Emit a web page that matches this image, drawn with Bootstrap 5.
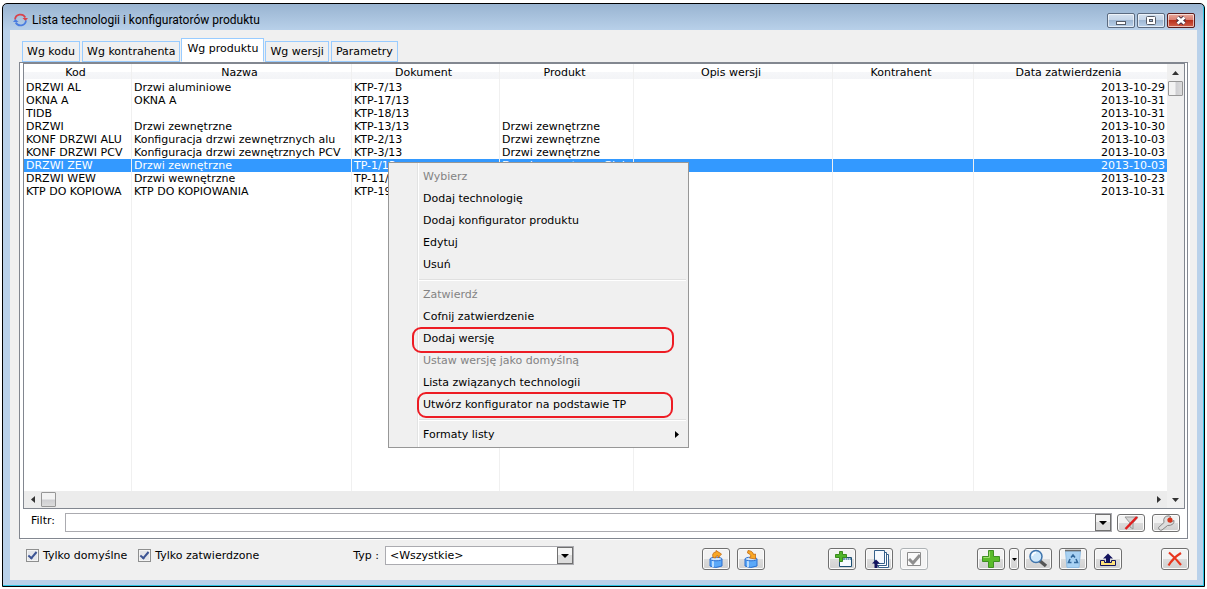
<!DOCTYPE html>
<html lang="pl">
<head>
<meta charset="utf-8">
<meta name="viewport" content="width=device-width, initial-scale=1">
<title>Lista technologii i konfiguratorów produktu</title>
<link href="https://cdn.jsdelivr.net/npm/bootstrap@5.3.0/dist/css/bootstrap.min.css" rel="stylesheet">
<style>
  body { font: 11px/13px "DejaVu Sans", Verdana, sans-serif; color: #000; background: #fff; }
  button, input, select { font: inherit; color: inherit; }
  svg { display: block; }

  .win { margin: 3px 2px 2px; border: 1px solid #000; border-radius: 5px 5px 0 0; padding: 0 7px 6px;
         background: linear-gradient(#99b4d1, #b9d1ea 27px); box-shadow: inset -1px -1px #2cc4e4; }
  .win-title { height: 26px; padding: 6px 2px 0 3px; font: 12px/20px Roboto, "Open Sans", sans-serif; }
  .cap-btns { gap: 2px; }
  .cap-btn { width: 28px; height: 15px; padding: 0; border: 1px solid #5b6b80; border-radius: 2px;
             background: linear-gradient(#d5e2f0, #c3d4e8 50%, #9fb8d4 50%, #b9d1ea); box-shadow: inset 0 0 0 1px #ffffff99; }
  .cap-close { border-color: #5a1c1c; background: linear-gradient(#e9a99c, #d8796a 50%, #b8301c 50%, #d2604a); }
  .client { background: #f0f0f0; padding-top: 8px; }

  .tabs { gap: 2px; padding-left: 12px; height: 24px; }
  .tab-btn { height: 21px; padding: 0 4px; border: 1px solid #99ccff; background: #f0f0f0; white-space: nowrap; }
  .tab-btn.active { height: 24px; padding: 0 5px 3px; background: #fff; margin: 0 -1px; border-bottom-color: #fff; }

  .panel { margin: 0 9px 0 9px; border: 1px solid #828790; background: #fff; box-shadow: 2px 1px #fff; }
  .listbox { display: grid; grid-template-columns: 1fr 17px; grid-template-rows: 1fr 17px;
             margin: 0 2px 0 3px; border: 1px solid #828790; }
  .data { table-layout: fixed; width: 100%; height: 100%; border-collapse: separate; border-spacing: 0; }
  .data th, .data td { height: 13px; padding: 0 2px; line-height: 13px; white-space: nowrap; overflow: hidden; border-right: 1px solid #f0f0f0; }
  .data th { height: 17px; padding: 0 4px 0 0; font-weight: 400; text-align: center; background: linear-gradient(#fff 8px, #f6f7f9 8px, #f3f4f7 15px, #fff 15px); }
  .data th:last-child, .data td:last-child { border-right: 0; }
  .data td:last-child { text-align: right; }
  .data .sel td { background: #3399ff; color: #fff; }
  .data .rest td { height: auto; }
  .vbar { background: #f0f0f0; }
  .hbar { background: #ececec; }
  .sb-btn { width: 17px; height: 17px; padding: 0; border: 0; background: none; display: grid; place-items: center; }
  .thumb { width: 15px; height: 15px; border: 1px solid #979797; border-radius: 1px; }
  .vbar .thumb { background: linear-gradient(90deg, #f3f3f3 45%, #cfcfd2 55%, #dcdcdc); }
  .hbar .thumb { background: linear-gradient(#f3f3f3 45%, #cfcfd2 55%, #dcdcdc); }

  .filter { gap: 5px; padding: 4px 7px 6px 11px; }
  .filter label { width: 29px; line-height: 16px; }
  .filter .tool + .tool { margin-left: 2px; }
  .combo { border: 1px solid #ababb0; background: #fff; height: 19px; }
  .combo input, .combo select { appearance: none; border: 0; outline: 0; background: none; padding: 0 4px; height: 17px; line-height: 17px; width: 100%; }
  .drop { width: 16px; height: 17px; flex: none; padding: 0; border: 1px solid #707070; display: grid; place-items: center;
          background: linear-gradient(#f4f4f4 50%, #dcdcdc 50%); pointer-events: none; }
  .tool { width: 28px; height: 22px; padding: 0; border: 1px solid #707070; border-radius: 3px; display: grid; place-items: center;
          background: linear-gradient(#f2f2f2 50%, #dcdcdc 50%, #d0d0d0); box-shadow: inset 0 0 0 1px #fcfcfc; }
  .tool.low { height: 18px; }
  .tool.slim { width: 10px; margin: 0 -2px 0 -3px; }
  .tool:disabled { border-color: #adb2b5; background: #f4f4f4; }

  .footer-bar { padding: 7px 8px 9px 16px; height: 41px; }
  .ticks { height: 18px; }
  .tick { appearance: none; width: 13px; height: 13px; margin: 0 4px 0 0; border: 1px solid #8e8f8f; background: #e4e6ea;
          box-shadow: inset 0 0 0 1px #f4f4f4; display: grid; place-items: center; }
  label + .tick { margin-left: 11px; }
  .tick:checked::before { content: ""; width: 5px; height: 9px; border: solid #3c5494; border-width: 0 2px 2px 0; transform: rotate(40deg); margin-top: -2px; }
  .typ-group { gap: 6px; margin-left: 94px; }
  .typ { width: 189px; }
  .tools-right { gap: 7px; margin-top: 2px; }
  .gap-a { margin-left: 56px; }
  .gap-b { margin-left: 2px; }
  .gap-c { margin-left: 42px; }
  .gap-d { margin-left: 32px; }

  .ctx { left: 388px; top: 162px; width: 301px; padding: 2px; border: 1px solid #979797; border-radius: 0; font-size: 11px; color: #000;
         background: linear-gradient(90deg, #f0f0f0 28px, #e2e3e3 28px, #e2e3e3 29px, #fff 29px, #fff 30px, #f0f0f0 30px); }
  .ctx .dropdown-item { height: 22px; padding: 1px 7px 0 32px; line-height: 20px; color: #000; position: relative; }
  .ctx .dropdown-item:disabled { color: #838383; }
  .ctx hr { margin: 4px 0 2px 28px; border-top: 1px solid #e0e0e0; border-bottom: 1px solid #fff; opacity: 1; }
  .ringed::after { content: ""; position: absolute; border: 2px solid #ed1c24; border-radius: 9px; inset: 0 12px -4px 21px; }
  .ringed.narrow::after { inset: -1px 13px -3px 26px; }
</style>
</head>
<body class="min-vh-100 d-flex flex-column">
<main class="win flex-grow-1 d-flex flex-column">
  <header class="win-title d-flex align-items-center">
    <svg width="15" height="14" viewBox="0 0 15 14" fill="none" stroke-width="1.800"><path d="M2 6.500A5.500 5.500 0 0 1 12.300 4.500" stroke="#d8434b"/><path d="M9.500 5h5.500l-2.500 3z" fill="#d8434b"/><path d="M13 7.500A5.500 5.500 0 0 1 2.700 9.500" stroke="#4a7de0"/><path d="M0 9h5.500L2.500 6z" fill="#4a7de0"/></svg>
    <span class="ms-1">Lista technologii i konfiguratorów produktu</span>
    <div class="cap-btns ms-auto d-flex">
      <button class="cap-btn" aria-label="Minimalizuj"><svg width="26" height="13"><rect x="8.500" y="7.500" width="9" height="3" fill="#fff" stroke="#555b66"/></svg></button>
      <button class="cap-btn" aria-label="Maksymalizuj"><svg width="26" height="13"><rect x="8.500" y="2.500" width="9" height="8" rx="1" fill="#fff" stroke="#555b66"/><rect x="11.500" y="5.500" width="3" height="2" fill="#9fb8d4" stroke="#555b66"/></svg></button>
      <button class="cap-btn cap-close" aria-label="Zamknij"><svg width="26" height="13"><path d="M9.500 3.500l7 6m0-6l-7 6" stroke="#4b3040" stroke-width="4.500"/><path d="M9.500 3.500l7 6m0-6l-7 6" stroke="#fff" stroke-width="2.600"/></svg></button>
    </div>
  </header>

  <section class="client flex-grow-1 d-flex flex-column">
    <nav class="tabs d-flex align-items-end" aria-label="Zakładki">
      <button class="tab-btn">Wg kodu</button>
      <button class="tab-btn">Wg kontrahenta</button>
      <button class="tab-btn active">Wg produktu</button>
      <button class="tab-btn">Wg wersji</button>
      <button class="tab-btn">Parametry</button>
    </nav>

    <div class="panel flex-grow-1 d-flex flex-column">
      <div class="listbox flex-grow-1">
        <table class="data">
          <colgroup><col style="width:108px"><col style="width:220px"><col style="width:148px"><col style="width:134px"><col style="width:199px"><col style="width:141px"><col></colgroup>
          <thead><tr><th>Kod</th><th>Nazwa</th><th>Dokument</th><th>Produkt</th><th>Opis wersji</th><th>Kontrahent</th><th>Data zatwierdzenia</th></tr></thead>
          <tbody>
            <tr><td>DRZWI AL</td><td>Drzwi aluminiowe</td><td>KTP-7/13</td><td></td><td></td><td></td><td>2013-10-29</td></tr>
            <tr><td>OKNA A</td><td>OKNA A</td><td>KTP-17/13</td><td></td><td></td><td></td><td>2013-10-31</td></tr>
            <tr><td>TIDB</td><td></td><td>KTP-18/13</td><td></td><td></td><td></td><td>2013-10-31</td></tr>
            <tr><td>DRZWI</td><td>Drzwi zewnętrzne</td><td>KTP-13/13</td><td>Drzwi zewnętrzne</td><td></td><td></td><td>2013-10-30</td></tr>
            <tr><td>KONF DRZWI ALU</td><td>Konfiguracja drzwi zewnętrznych alu</td><td>KTP-2/13</td><td>Drzwi zewnętrzne</td><td></td><td></td><td>2013-10-03</td></tr>
            <tr><td>KONF DRZWI PCV</td><td>Konfiguracja drzwi zewnętrznych PCV</td><td>KTP-3/13</td><td>Drzwi zewnętrzne</td><td></td><td></td><td>2013-10-03</td></tr>
            <tr class="sel"><td>DRZWI ZEW</td><td>Drzwi zewnętrzne</td><td>TP-1/13</td><td>Drzwi zewnętrzne Glob</td><td></td><td></td><td>2013-10-03</td></tr>
            <tr><td>DRZWI WEW</td><td>Drzwi wewnętrzne</td><td>TP-11/13</td><td></td><td></td><td></td><td>2013-10-23</td></tr>
            <tr><td>KTP DO KOPIOWA</td><td>KTP DO KOPIOWANIA</td><td>KTP-19/13</td><td></td><td></td><td></td><td>2013-10-31</td></tr>
            <tr class="rest"><td></td><td></td><td></td><td></td><td></td><td></td><td></td></tr>
          </tbody>
        </table>
        <div class="vbar d-flex flex-column align-items-center">
          <button class="sb-btn" aria-label="W górę"><svg width="7" height="4"><path d="M0 4l3.500-4L7 4z" fill="#333"/></svg></button>
          <div class="thumb"></div>
        </div>
        <div class="hbar d-flex align-items-center">
          <button class="sb-btn" aria-label="W lewo"><svg width="4" height="7"><path d="M4 0L0 3.500 4 7z" fill="#333"/></svg></button>
          <div class="thumb"></div>
          <button class="sb-btn ms-auto" aria-label="W prawo"><svg width="4" height="7"><path d="M0 0l4 3.500L0 7z" fill="#333"/></svg></button>
        </div>
        <div class="vbar"><button class="sb-btn" aria-label="W dół"><svg width="7" height="4"><path d="M0 0h7L3.500 4z" fill="#333"/></svg></button></div>
      </div>
      <div class="filter d-flex align-items-start">
        <label for="filtr">Filtr:</label>
        <div class="combo d-flex flex-grow-1"><input id="filtr" type="text"><button class="drop" aria-label="Rozwiń"><svg width="8" height="4"><path d="M0 0h8L4 4z"/></svg></button></div>
        <button class="tool low mt-auto" aria-label="Wyczyść filtr"><svg width="20" height="16" viewBox="0 0 20 16"><path d="M4 2h13l-5 6v6l-3-2V8z" fill="#d4d4d4" stroke="#9a9a9a"/><path d="M4.500 14L16 2" stroke="#e02020" stroke-width="2.500"/></svg></button>
        <button class="tool low mt-auto" aria-label="Ustawienia filtra"><svg width="20" height="16" viewBox="0 0 20 16"><path d="M2.500 12.500L8 7.500Q6.500 1 13 .800l2 1-3 2.700 2 3 4-2q.500 5-6.500 5L6 15q-3 1-3.500-2.500z" fill="#ddd" stroke="#858585"/><circle cx="14" cy="5" r="2.600" fill="#d8351c"/></svg></button>
      </div>
    </div>

    <div class="footer-bar d-flex align-items-start">
      <div class="ticks d-flex align-items-center">
        <input class="tick" type="checkbox" id="dom" checked><label for="dom">Tylko domyślne</label>
        <input class="tick" type="checkbox" id="zat" checked><label for="zat">Tylko zatwierdzone</label>
      </div>
      <div class="typ-group d-flex align-items-center">
        <label for="typ" class="text-nowrap">Typ :</label>
        <div class="combo typ d-flex"><select id="typ"><option>&lt;Wszystkie&gt;</option></select><span class="drop"><svg width="8" height="4"><path d="M0 0h8L4 4z"/></svg></span></div>
      </div>
      <div class="tools-right d-flex ms-auto">
        <button class="tool" aria-label="Eksport do bazy"><svg width="22" height="20" viewBox="0 0 22 20"><path d="M5 10v7q5.500 3 12 0v-7z" fill="#5aa8f8" stroke="#2a6fd0"/><path d="M8 11v7" stroke="#b8dcff" stroke-width="2"/><ellipse cx="11" cy="10" rx="6" ry="1.800" fill="#cfe6ff" stroke="#2a6fd0"/><path d="M8 8.500Q6.500 3.500 11 3V1.500L16.500 5 13 9V6.500Q10.500 6.500 10.500 9z" fill="#f9a825" stroke="#c46a10" stroke-width=".800"/></svg></button>
        <button class="tool" aria-label="Import z bazy"><svg width="22" height="20" viewBox="0 0 22 20"><path d="M5 10v7q5.500 3 12 0v-7z" fill="#5aa8f8" stroke="#2a6fd0"/><path d="M8 11v7" stroke="#b8dcff" stroke-width="2"/><ellipse cx="11" cy="10" rx="6" ry="1.800" fill="#cfe6ff" stroke="#2a6fd0"/><path d="M8 1.500q5 .500 5.500 4L15.500 5v5L9.500 9l1.500-2Q10.500 5 7.500 4z" fill="#f9a825" stroke="#c46a10" stroke-width=".800"/></svg></button>
        <button class="tool gap-a" aria-label="Dodaj okno"><svg width="22" height="20" viewBox="0 0 22 20"><path d="M8.500 8.500h12v9h-12z" fill="#f8fbff" stroke="#1d4f73"/><path d="M9 9h11v2H9z" fill="#6e98b8"/><path d="M14 10h1m1 0h1m1 0h1" stroke="#fff"/><path d="M8.500 2.500h3v3h4v3h-4v4h-3v-4h-4v-3h4z" fill="#4fb52a" stroke="#3b8a1e"/></svg></button>
        <button class="tool gap-b" aria-label="Wersje"><svg width="22" height="20" viewBox="0 0 22 20"><path d="M10.500 5.500h10v13h-10z" fill="#fff" stroke="#35608a"/><path d="M8.500 3.500h10v13h-10z" fill="#fff" stroke="#35608a"/><path d="M6.500 1.500h10v13h-10z" fill="#f6faff" stroke="#35608a"/><path d="M8 10.500l4 4H9.500V19h-3v-4.500H4z" fill="#14145e"/></svg></button>
        <button class="tool" disabled aria-label="Zatwierdź"><svg width="18" height="18" viewBox="0 0 18 18"><path d="M2.500 2.500h13v13h-13z" fill="#fafafa" stroke="#8a8a8a"/><path d="M4 9l4 4 7-8" fill="none" stroke="#8f8f8f" stroke-width="3"/></svg></button>
        <button class="tool gap-c" aria-label="Dodaj"><svg width="20" height="20" viewBox="0 0 20 20"><path d="M7.500 1.500h5v6h6v5h-6v6h-5v-6h-6v-5h6z" fill="#5abb2a" stroke="#3f8f22"/><path d="M8.500 2.500v6h-6" fill="none" stroke="#a0dd70"/></svg></button>
        <button class="tool slim" aria-label="Więcej"><svg width="5" height="3"><path d="M0 0h5L2.500 3z"/></svg></button>
        <button class="tool" aria-label="Podgląd"><svg width="22" height="20" viewBox="0 0 22 20"><path d="M13 12l6 5" stroke="#555" stroke-width="3.500"/><circle cx="9" cy="7.500" r="6" fill="#cfe8fa" stroke="#3f74ac" stroke-width="1.500"/><path d="M5.500 7q0-3 3.500-3.500" stroke="#fff" stroke-width="1.500" fill="none"/></svg></button>
        <button class="tool" aria-label="Usuń do kosza"><svg width="22" height="20" viewBox="0 0 22 20"><path d="M3.500 2h15l-1.500 16.500H5z" fill="#a9d2f3" stroke="#8fbde4"/><path d="M3 1.500h16" stroke="#6b6b6b" stroke-width="1.600"/><path d="M9 8.500l2-2.500 2 2.500M14 10l1.500 3.500H12M9.500 13.500h-3L8 10" fill="none" stroke="#33699c" stroke-width="1.600"/></svg></button>
        <button class="tool" aria-label="Wyślij"><svg width="22" height="20" viewBox="0 0 22 20"><path d="M3.500 11.500h4v2h7v-2h4v5h-15z" fill="#ffe27a" stroke="#14145e"/><path d="M11 4.500l5 5h-3V13H9V9.500H6z" fill="#14145e"/></svg></button>
        <button class="tool gap-d" aria-label="Zamknij okno"><svg width="20" height="20" viewBox="0 0 20 20"><path d="M4 3.500q6 5 12 12.500M16 4Q8 9 3.500 16.500" fill="none" stroke="#e8361e" stroke-width="2.200"/></svg></button>
      </div>
    </div>
  </section>
</main>

<div class="ctx dropdown-menu show">
  <button class="dropdown-item" disabled>Wybierz</button>
  <button class="dropdown-item">Dodaj technologię</button>
  <button class="dropdown-item">Dodaj konfigurator produktu</button>
  <button class="dropdown-item">Edytuj</button>
  <button class="dropdown-item">Usuń</button>
  <hr>
  <button class="dropdown-item" disabled>Zatwierdź</button>
  <button class="dropdown-item">Cofnij zatwierdzenie</button>
  <button class="dropdown-item ringed">Dodaj wersję</button>
  <button class="dropdown-item" disabled>Ustaw wersję jako domyślną</button>
  <button class="dropdown-item">Lista związanych technologii</button>
  <button class="dropdown-item ringed narrow">Utwórz konfigurator na podstawie TP</button>
  <hr>
  <button class="dropdown-item d-flex align-items-center">Formaty listy<svg class="ms-auto" width="4" height="7"><path d="M0 0l4 3.500L0 7z"/></svg></button>
</div>
<script src="https://cdn.jsdelivr.net/npm/bootstrap@5.3.0/dist/js/bootstrap.bundle.min.js"></script>
</body>
</html>
